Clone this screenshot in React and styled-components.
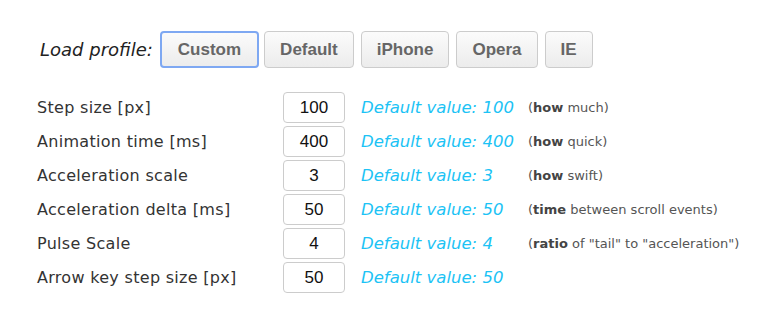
import styled, { createGlobalStyle } from 'styled-components'

const GlobalStyle = createGlobalStyle`
    body {
        margin: 0;
        background: #fff;
        font-family: "DejaVu Sans", Verdana, sans-serif;
    }
`

const profiles = ['Custom', 'Default', 'iPhone', 'Opera', 'IE']

const options = [
    { label: 'Step size [px]', value: 100, strong: 'how', note: ' much)' },
    { label: 'Animation time [ms]', value: 400, strong: 'how', note: ' quick)' },
    { label: 'Acceleration scale', value: 3, strong: 'how', note: ' swift)' },
    { label: 'Acceleration delta [ms]', value: 50, strong: 'time', note: ' between scroll events)' },
    { label: 'Pulse Scale', value: 4, strong: 'ratio', note: ' of "tail" to "acceleration")' },
    { label: 'Arrow key step size [px]', value: 50 },
]

const App = () => {
    return (
        <>
            <GlobalStyle />
            <Page>
                <Profiles>
                    <ProfileLabel>Load profile:</ProfileLabel>
                    {profiles.map(name => (
                        <ProfileButton key={name} $active={name === 'Custom'}>{name}</ProfileButton>
                    ))}
                </Profiles>
                <Options>
                    {options.map(opt => (
                        <Row key={opt.label}>
                            <Label>{opt.label}</Label>
                            <ValueInput defaultValue={opt.value} />
                            <DefaultValue>Default value: {opt.value}</DefaultValue>
                            {opt.strong && (
                                <Note>(<b>{opt.strong}</b>{opt.note}</Note>
                            )}
                        </Row>
                    ))}
                </Options>
            </Page>
        </>
    )
}

const Page = styled.div`
    padding: 31px 0 0 37px;
`

const Profiles = styled.div`
    display: flex;
    align-items: center;
    padding-left: 3px;
`

const ProfileLabel = styled.span`
    font-style: italic;
    font-size: 18px;
    color: #222;
    margin-right: 7px;
`

const ProfileButton = styled.button`
    height: 37px;
    font-family: "Liberation Sans", Arial, sans-serif;
    font-weight: bold;
    font-size: 17px;
    color: #666;
    background: linear-gradient(#fbfbfb, #ececec);
    border: ${p => p.$active ? '2px solid #7ea8f2' : '1px solid #ccc'};
    border-radius: 4px;
    padding: ${p => p.$active ? '0 16px' : '0 15px'};
    margin-right: ${p => p.$active ? '5px' : '7px'};
`

const Options = styled.div`
    margin-top: 24px;
    display: flex;
    flex-direction: column;
    gap: 3px;
`

const Row = styled.div`
    display: grid;
    grid-template-columns: 246px 62px 183px auto;
    align-items: center;
    height: 31px;
`

const Label = styled.span`
    font-size: 16px;
    letter-spacing: 0.3px;
    color: #333;
`

const ValueInput = styled.input`
    box-sizing: border-box;
    width: 62px;
    height: 31px;
    border: 1px solid #ccc;
    border-radius: 4px;
    text-align: center;
    font-family: "Liberation Sans", Arial, sans-serif;
    font-size: 17px;
    color: #111;
    outline: none;
`

const DefaultValue = styled.span`
    padding-left: 16px;
    font-style: italic;
    font-size: 16.5px;
    color: #1cc3f5;
`

const Note = styled.span`
    font-size: 13px;
    color: #555;

    b {
        color: #444;
    }
`

export default App
